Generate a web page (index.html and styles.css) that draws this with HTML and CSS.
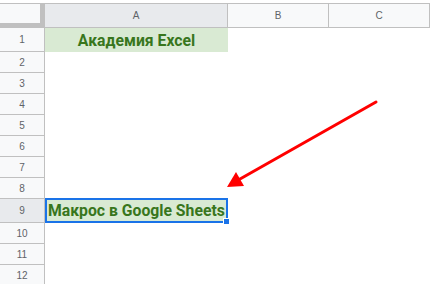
FILE: index.html
```html
<!DOCTYPE html>
<html>
<head>
<meta charset="utf-8">
<link rel="stylesheet" href="styles.css">
</head>
<body>
<div class="page">
  <div class="sheet">
    <div class="corner"></div>
    <div class="colhead sel">A</div>
    <div class="colhead">B</div>
    <div class="colhead">C</div>

    <div class="rowhead tall">1</div>
    <div class="cell green center tall">Академия Excel</div>
    <div class="cell tall"></div>
    <div class="cell tall"></div>

    <div class="rowhead">2</div><div class="cell"></div><div class="cell"></div><div class="cell"></div>
    <div class="rowhead">3</div><div class="cell"></div><div class="cell"></div><div class="cell"></div>
    <div class="rowhead">4</div><div class="cell"></div><div class="cell"></div><div class="cell"></div>
    <div class="rowhead">5</div><div class="cell"></div><div class="cell"></div><div class="cell"></div>
    <div class="rowhead">6</div><div class="cell"></div><div class="cell"></div><div class="cell"></div>
    <div class="rowhead">7</div><div class="cell"></div><div class="cell"></div><div class="cell"></div>
    <div class="rowhead">8</div><div class="cell"></div><div class="cell"></div><div class="cell"></div>

    <div class="rowhead tall sel">9</div>
    <div class="cell green tall active">Макрос в Google Sheets<span class="handle"></span></div>
    <div class="cell tall"></div>
    <div class="cell tall"></div>

    <div class="rowhead">10</div><div class="cell"></div><div class="cell"></div><div class="cell"></div>
    <div class="rowhead">11</div><div class="cell"></div><div class="cell"></div><div class="cell"></div>
    <div class="rowhead">12</div><div class="cell"></div><div class="cell"></div><div class="cell"></div>
  </div>
  <svg class="arrow" width="430" height="284" viewBox="0 0 430 284">
    <line x1="376" y1="102" x2="240" y2="179" stroke="#ff0000" stroke-width="3" stroke-linecap="round"/>
    <polygon points="227,187 236,172 244,186" fill="#ff0000"/>
  </svg>
</div>
</body>
</html>
```

FILE: styles.css
```css
html, body {
  margin: 0;
  padding: 0;
  background: #ffffff;
  overflow: hidden;
}

.page {
  position: relative;
  width: 430px;
  height: 284px;
  padding-top: 3px;
  box-sizing: border-box;
}

.sheet {
  display: grid;
  grid-template-columns: 45px 183px 101px 101px;
  grid-template-rows: 25px 24px repeat(7, 21px) 24px repeat(3, 21px);
  font-family: "Liberation Sans", Arial, sans-serif;
}

.corner {
  background: #f8f9fa;
  border-top: 1px solid #c0c0c0;
  border-right: 5px solid #c0c0c0;
  border-bottom: 5px solid #c0c0c0;
  box-sizing: border-box;
}

.colhead {
  background: #f8f9fa;
  border-top: 1px solid #c0c0c0;
  border-bottom: 1px solid #c0c0c0;
  border-right: 1px solid #c0c0c0;
  box-sizing: border-box;
  display: flex;
  align-items: center;
  justify-content: center;
  font-size: 10px;
  color: #5f6368;
}

.colhead.sel {
  background: #e8eaed;
}

.rowhead {
  background: #f8f9fa;
  border-right: 1px solid #c0c0c0;
  border-bottom: 1px solid #c0c0c0;
  box-sizing: border-box;
  display: flex;
  align-items: center;
  justify-content: center;
  font-size: 10px;
  color: #5f6368;
}

.rowhead.sel {
  background: #e8eaed;
}

.cell {
  background: #ffffff;
  box-sizing: border-box;
  display: flex;
  align-items: center;
  font-family: Roboto, "Liberation Sans", sans-serif;
  font-weight: 700;
  font-size: 15.75px;
  color: #38761d;
  white-space: nowrap;
}

.cell.green {
  background: #d9ead3;
}

.cell.center {
  justify-content: center;
}

.cell.active {
  position: relative;
  border: 2px solid #1a73e8;
  padding-left: 1px;
  margin-top: -1px;
  height: 25px;
}

.handle {
  position: absolute;
  right: -4px;
  bottom: -4px;
  width: 5px;
  height: 5px;
  background: #1a73e8;
  border: 1px solid #ffffff;
}

.arrow {
  position: absolute;
  left: 0;
  top: 0;
}
```
